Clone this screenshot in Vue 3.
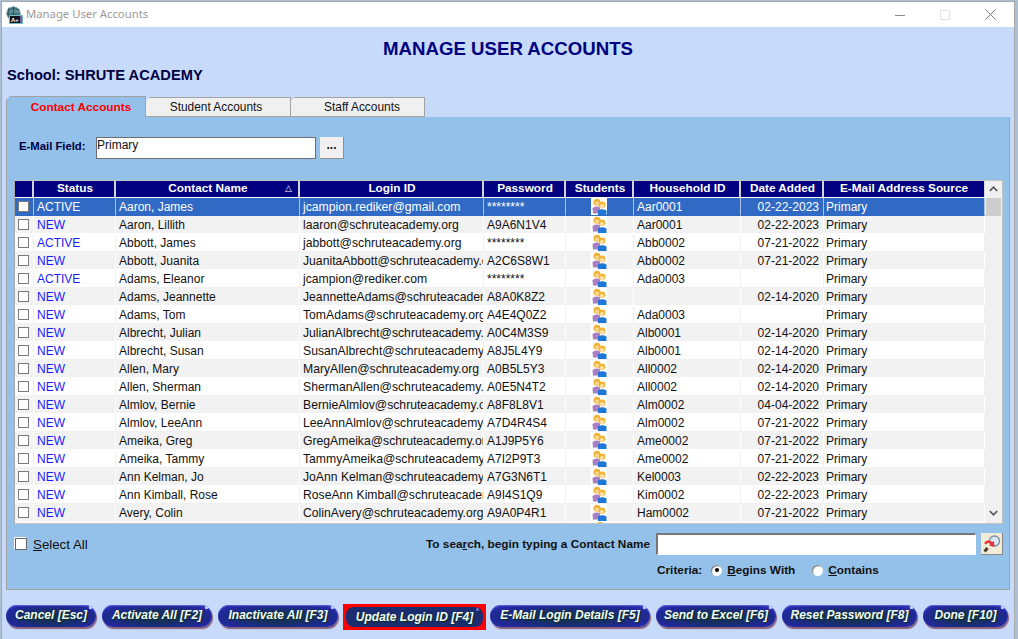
<script setup>
const rows = [
  ['ACTIVE','Aaron, James','jcampion.rediker@gmail.com','********','Aar0001','02-22-2023','Primary'],
  ['NEW','Aaron, Lillith','laaron@schruteacademy.org','A9A6N1V4','Aar0001','02-22-2023','Primary'],
  ['ACTIVE','Abbott, James','jabbott@schruteacademy.org','********','Abb0002','07-21-2022','Primary'],
  ['NEW','Abbott, Juanita','JuanitaAbbott@schruteacademy.org','A2C6S8W1','Abb0002','07-21-2022','Primary'],
  ['ACTIVE','Adams, Eleanor','jcampion@rediker.com','********','Ada0003','','Primary'],
  ['NEW','Adams, Jeannette','JeannetteAdams@schruteacademy.org','A8A0K8Z2','','02-14-2020','Primary'],
  ['NEW','Adams, Tom','TomAdams@schruteacademy.org','A4E4Q0Z2','Ada0003','','Primary'],
  ['NEW','Albrecht, Julian','JulianAlbrecht@schruteacademy.org','A0C4M3S9','Alb0001','02-14-2020','Primary'],
  ['NEW','Albrecht, Susan','SusanAlbrecht@schruteacademy.org','A8J5L4Y9','Alb0001','02-14-2020','Primary'],
  ['NEW','Allen, Mary','MaryAllen@schruteacademy.org','A0B5L5Y3','All0002','02-14-2020','Primary'],
  ['NEW','Allen, Sherman','ShermanAllen@schruteacademy.org','A0E5N4T2','All0002','02-14-2020','Primary'],
  ['NEW','Almlov, Bernie','BernieAlmlov@schruteacademy.org','A8F8L8V1','Alm0002','04-04-2022','Primary'],
  ['NEW','Almlov, LeeAnn','LeeAnnAlmlov@schruteacademy.org','A7D4R4S4','Alm0002','07-21-2022','Primary'],
  ['NEW','Ameika, Greg','GregAmeika@schruteacademy.org','A1J9P5Y6','Ame0002','07-21-2022','Primary'],
  ['NEW','Ameika, Tammy','TammyAmeika@schruteacademy.org','A7I2P9T3','Ame0002','07-21-2022','Primary'],
  ['NEW','Ann Kelman, Jo','JoAnn Kelman@schruteacademy.org','A7G3N6T1','Kel0003','02-22-2023','Primary'],
  ['NEW','Ann Kimball, Rose','RoseAnn Kimball@schruteacademy.org','A9I4S1Q9','Kim0002','02-22-2023','Primary'],
  ['NEW','Avery, Colin','ColinAvery@schruteacademy.org','A9A0P4R1','Ham0002','07-21-2022','Primary'],
]
const buttons = [
  { label: 'Cancel [Esc]', w: 90 },
  { label: 'Activate All [F2]', w: 110 },
  { label: 'Inactivate All [F3]', w: 120 },
  { label: 'Update Login ID [F4]', w: 143, active: true },
  { label: 'E-Mail Login Details [F5]', w: 160 },
  { label: 'Send to Excel [F6]', w: 120 },
  { label: 'Reset Password [F8]', w: 135 },
  { label: 'Done [F10]', w: 85 },
]
</script>

<template>
  <div class="desktop">
    <div class="window">
      <div class="titlebar">
        <svg class="appicon" width="18" height="18" viewBox="0 0 18 18">
          <circle cx="8.5" cy="7.5" r="7" fill="#5f8f94" />
          <path d="M2.5 4 Q8.5 1 14.5 4 M1.5 8 H15.5 M8.5 .5 V13 M4 1.5 Q2 8 5 14" stroke="#1f4a52" fill="none" stroke-width=".8" />
          <rect x="4.5" y="9.5" width="13" height="8" fill="#10161a" stroke="#6fbcc0" />
          <rect x="15" y="10" width="2" height="7" fill="#7a5fa8" />
          <text x="6" y="16" class="icontext">A+</text>
        </svg>
        <span class="wintitle">Manage User Accounts</span>
        <div class="winbtns">
          <svg width="10" height="10" viewBox="0 0 10 10"><path d="M0 5.5H10" stroke="#8a8a8a" /></svg>
          <svg width="10" height="10" viewBox="0 0 10 10"><rect x=".5" y=".5" width="9" height="9" fill="none" stroke="#e2e2e2" /></svg>
          <svg width="11" height="11" viewBox="0 0 11 11"><path d="M.5 .5L10.5 10.5M10.5 .5L.5 10.5" stroke="#777" /></svg>
        </div>
      </div>
      <div class="client">
        <h1 class="heading">MANAGE USER ACCOUNTS</h1>
        <div class="school">School: SHRUTE ACADEMY</div>
        <div class="tabs">
          <div class="tab tab-on">Contact Accounts</div>
          <div class="tab tab-2">Student Accounts</div>
          <div class="tab tab-3">Staff Accounts</div>
        </div>
        <div class="panel">
          <div class="emailrow">
            <label class="emaillabel">E-Mail Field:</label>
            <div class="emailinput">Primary</div>
            <div class="dots">...</div>
          </div>
          <div class="table">
            <div class="tablemain">
              <div class="row head">
                <div class="cell"></div>
                <div class="cell">Status</div>
                <div class="cell namehead">Contact Name<span class="sort">△</span></div>
                <div class="cell">Login ID</div>
                <div class="cell">Password</div>
                <div class="cell">Students</div>
                <div class="cell">Household ID</div>
                <div class="cell">Date Added</div>
                <div class="cell">E-Mail Address Source</div>
              </div>
              <div class="body">
                <div v-for="(r, i) in rows" :key="i" class="row data" :class="{ sel: i === 0, alt: i % 2 === 1 }">
                  <div class="cell chk"><span class="box"></span></div>
                  <div class="cell st" :class="{ blue: i !== 0 }">{{ r[0] }}</div>
                  <div class="cell">{{ r[1] }}</div>
                  <div class="cell login">{{ r[2] }}</div>
                  <div class="cell">{{ r[3] }}</div>
                  <div class="cell ico">
                    <svg width="16" height="17" viewBox="0 0 16 17">
                      <rect width="16" height="17" fill="#fff" />
                      <path d="M1.5 10 Q6 7.5 9 9.5 V15.5 H2Z" fill="#a97fc4" />
                      <circle cx="6" cy="4.2" r="3.5" fill="#eeb238" />
                      <circle cx="6" cy="5.6" r="2" fill="#f8d9a0" />
                      <path d="M7 12.5 Q11 10 15.5 12.5 V17 H7Z" fill="#1e76d6" />
                      <circle cx="11" cy="6.8" r="3.4" fill="#f2b435" />
                      <circle cx="11" cy="8.2" r="2.1" fill="#fbdfa8" />
                    </svg>
                  </div>
                  <div class="cell">{{ r[4] }}</div>
                  <div class="cell date">{{ r[5] }}</div>
                  <div class="cell source">{{ r[6] }}</div>
                </div>
                <div class="row partial">
                  <div class="pico"></div>
                </div>
              </div>
            </div>
            <div class="scroll">
              <svg class="arrow" width="9" height="6" viewBox="0 0 9 6"><path d="M.8 5L4.5 1.2L8.2 5" fill="none" stroke="#555" stroke-width="1.7" /></svg>
              <div class="thumb"></div>
              <svg class="arrow down" width="9" height="6" viewBox="0 0 9 6"><path d="M.8 1L4.5 4.8L8.2 1" fill="none" stroke="#555" stroke-width="1.7" /></svg>
            </div>
          </div>
          <div class="lower">
            <div class="selectall"><span class="sabox"></span><span><u>S</u>elect All</span></div>
            <div class="searcharea">
              <div class="searchrow">
                <span class="searchlabel">To sea<u>r</u>ch, begin typing a Contact Name</span>
                <div class="searchinput"></div>
                <div class="searchbtn">
                  <svg width="20" height="20" viewBox="0 0 20 20">
                    <circle cx="12.5" cy="7" r="5" fill="#dbe8f6" stroke="#7d90a8" stroke-width="1.4" />
                    <path d="M5.5 14L2.5 17.5" stroke="#4e3a2c" stroke-width="3" />
                    <path d="M2 9 Q6 4 10 8 L12 7 L12.5 13 L7 11.5 L8.5 10 Q6 8 4 10.5Z" fill="#e5343a" />
                  </svg>
                </div>
              </div>
              <div class="criteria">
                <span>Criteria:</span>
                <span class="radio on"></span><span class="rlabel"><u>B</u>egins With</span>
                <span class="radio second"></span><span class="rlabel"><u>C</u>ontains</span>
              </div>
            </div>
          </div>
        </div>
        <div class="footer">
          <div v-for="b in buttons" :key="b.label" class="btnwrap" :class="{ active: b.active }" :style="{ width: b.w + 'px' }">
            <div class="btn">{{ b.label }}</div>
          </div>
        </div>
      </div>
    </div>
  </div>
</template>

<style>
html, body { margin: 0; overflow: hidden; background: #aebfd2; }
</style>

<style scoped>
.desktop { width: 1018px; height: 639px; overflow: hidden; font-family: "Liberation Sans", Arial, sans-serif; box-sizing: border-box; padding: 1px 3px 0 1px; background: #aebfd2; }
.window { height: 638px; box-sizing: border-box; border: 1px solid #a9a9a9; border-bottom: 0; display: flex; flex-direction: column; background: #c8dafa; }
.titlebar { height: 25px; background: #fff; display: flex; align-items: center; padding-left: 3px; flex: none; }
.appicon { margin-right: 3px; }
.icontext { font: bold 6px "Liberation Sans", sans-serif; fill: #fff; }
.wintitle { font-size: 11.3px; font-family: "Noto Sans", "Liberation Sans", sans-serif; color: #9a9a9a; position: relative; top: -1px; }
.winbtns { margin-left: auto; display: flex; align-items: center; gap: 35px; padding-right: 18px; }
.winbtns svg { display: block; }
.client { flex: 1; padding: 0 4px; min-height: 0; }
.heading { margin: 11px 0 0; height: 22px; line-height: 22px; text-align: center; font-size: 18.67px; font-weight: bold; color: #000080; }
.school { margin-top: 7px; margin-left: 1px; height: 16px; line-height: 16px; font-size: 14.67px; font-weight: bold; color: #000040; }
.tabs { display: flex; margin-top: 13px; height: 21px; align-items: flex-end; }
.tab { height: 20px; line-height: 19px; box-sizing: border-box; text-align: center; font-size: 11.9px; border: 1px solid #a2a2a2; border-left: 0; background: #f0f0f0; color: #111; clip-path: polygon(4px 0, 100% 0, 100% 100%, 0 100%, 0 4px); }
.tab-on { width: 140px; height: 21px; line-height: 20px; background: #94c1ea; color: #f00; font-weight: bold; border-left: 1px solid #a2a2a2; border-bottom: 0; padding-left: 10px; font-size: 11.8px; }
.tab-2 { width: 145px; padding-right: 4px; }
.tab-3 { width: 134px; padding-left: 9px; }
.panel { width: 1004px; height: 473px; box-sizing: border-box; border: 1px solid #a2a2a2; border-top: 0; background: #94c1ea; padding-left: 7px; }
.emailrow { display: flex; align-items: flex-start; padding-top: 20px; height: 43px; box-sizing: border-box; }
.emaillabel { width: 82px; font-size: 11.3px; font-weight: bold; color: #000040; line-height: 18px; padding-left: 5px; box-sizing: border-box; }
.emailinput { width: 220px; height: 22px; box-sizing: border-box; background: #fff; border: 1px solid #6e6e6e; font-size: 12px; line-height: 15px; color: #111; }
.dots { width: 24px; height: 22px; margin-left: 4px; background: #f0f0f0; font-size: 12px; font-weight: bold; text-align: center; line-height: 17px; color: #111; border-right: 1px solid #8f8f8f; border-bottom: 1px solid #8f8f8f; box-sizing: border-box; }
.table { display: flex; margin-top: 20px; height: 344px; background: #fff; border: 1px solid #c4c4c4; border-left: 1px solid #a8a8a8; width: 989px; box-sizing: border-box; }
.tablemain { flex: none; width: 970px; overflow: hidden; }
.scroll { flex: 1; background: #f0f0f0; display: flex; flex-direction: column; align-items: center; }
.arrow { margin-top: 5px; flex: none; }
.thumb { width: 15px; height: 18px; margin-top: 6px; background: #cdcdcd; }
.arrow.down { margin-top: auto; margin-bottom: 7px; }
.row { display: grid; grid-template-columns: 19px 82px 184px 184px 82px 68px 107px 83px 161px; }
.head { height: 17px; background: #fff; }
.head .cell { background: #000080; color: #fff; font-size: 11.8px; font-weight: bold; text-align: center; line-height: 15px; height: 16px; padding-left: 2px; border-right: 2px solid #d4d4d4; box-sizing: border-box; position: relative; }
.head .cell:last-child { border-right: 1px solid #d4d4d4; padding-left: 0; }
.sort { position: absolute; right: 6px; top: 0; font-size: 9px; font-weight: normal; }
.body { height: 325px; overflow: hidden; }
.data { height: 18px; font-size: 12px; color: #111; background: #fff; }
.data .cell { height: 18px; line-height: 18px; padding-left: 3px; border-right: 1px solid #f0f0f0; border-bottom: 1px solid #f0f0f0; white-space: nowrap; overflow: hidden; box-sizing: border-box; }
.data .login { font-size: 12.2px; }
.data .source { padding-left: 2px; }
.alt { background: #f2f2f2; }
.alt .cell { border-color: #fff; }
.sel { background: #316ac5; color: #fff; }
.sel .cell { border-color: #a9c4ea; border-bottom-color: #316ac5; }
.blue { color: #1a1aff; }
.data .chk { display: flex; align-items: center; justify-content: center; padding: 0 1px 1px 0; }
.box { width: 9px; height: 9px; border: 1px solid #7a7a7a; background: #fff; display: block; }
.data .ico { display: flex; justify-content: center; padding: 0 1px 0 0; }
.ico svg { display: block; flex: none; }
.data .date { text-align: right; padding: 0 4px 0 0; }
.partial { height: 2px; }
.pico { grid-column: 6; justify-self: center; width: 6px; height: 2px; background: #eeb238; border-radius: 3px 3px 0 0; }
.lower { display: flex; justify-content: space-between; height: 65px; padding-top: 9px; box-sizing: border-box; width: 989px; }
.selectall { display: flex; align-items: center; gap: 6px; height: 20px; margin-top: 1px; font-size: 13.3px; color: #111; padding-left: 1px; }
.sabox { width: 10px; height: 10px; border: 1px solid #666; background: #fff; box-shadow: -1px -1px 0 #fff; display: block; }
.searcharea { display: flex; flex-direction: column; align-items: flex-end; }
.searchrow { display: flex; align-items: center; }
.searchlabel { font-size: 11.8px; font-weight: bold; color: #111; margin-right: 6px; }
.searchinput { width: 320px; height: 22px; background: #fff; box-sizing: border-box; border: 1px solid #fff; border-top: 2px solid #777; border-left: 2px solid #777; }
.searchbtn { width: 22px; height: 22px; margin-left: 5px; background: #f1ecd8; border-right: 1px solid #888; border-bottom: 1px solid #888; box-sizing: border-box; display: flex; align-items: center; justify-content: center; }
.criteria { display: flex; align-items: center; font-size: 11.8px; font-weight: bold; color: #111; margin-top: 6px; width: 346px; box-sizing: border-box; height: 18px; }
.radio { width: 11px; height: 11px; border-radius: 50%; background: #fff; box-shadow: inset 1px 1px 1px #777; margin: 0 5px 0 9px; position: relative; display: block; flex: none; }
.radio.on::after { content: ""; position: absolute; left: 3.5px; top: 3.5px; width: 4px; height: 4px; background: #000; border-radius: 50%; }
.radio.second { margin-left: 17px; }
.footer { display: flex; gap: 6px; margin-top: 15px; }
.btnwrap { height: 22px; box-sizing: border-box; flex: none; }
.btn { height: 100%; border-radius: 11px; background: radial-gradient(ellipse at 50% 55%, #16305f 0 30%, #20289a 72%, #3338c6 100%); box-shadow: 1px 2px 1px #8a5f78, inset 0 1px 1px #5a62dd; color: #f2fbf5; font-size: 12px; font-weight: bold; font-style: italic; line-height: 20px; text-align: center; white-space: nowrap; text-shadow: 1px 1px 1px #0a3020; position: relative; overflow: hidden; }
.btn::after { content: ""; position: absolute; right: 4px; top: 1px; width: 3px; height: 3px; background: #c9d0ff; border-radius: 50%; box-shadow: 0 0 1px #c9d0ff; }
.active { border: 3px solid #f00; background: #f00; height: 26px; margin: -1px -2px 0 -1px; }
.active .btn { border-radius: 8px; background: #1b2d6e; box-shadow: none; line-height: 20px; }
.active .btn::after { background: #6f78c8; box-shadow: none; }
</style>
